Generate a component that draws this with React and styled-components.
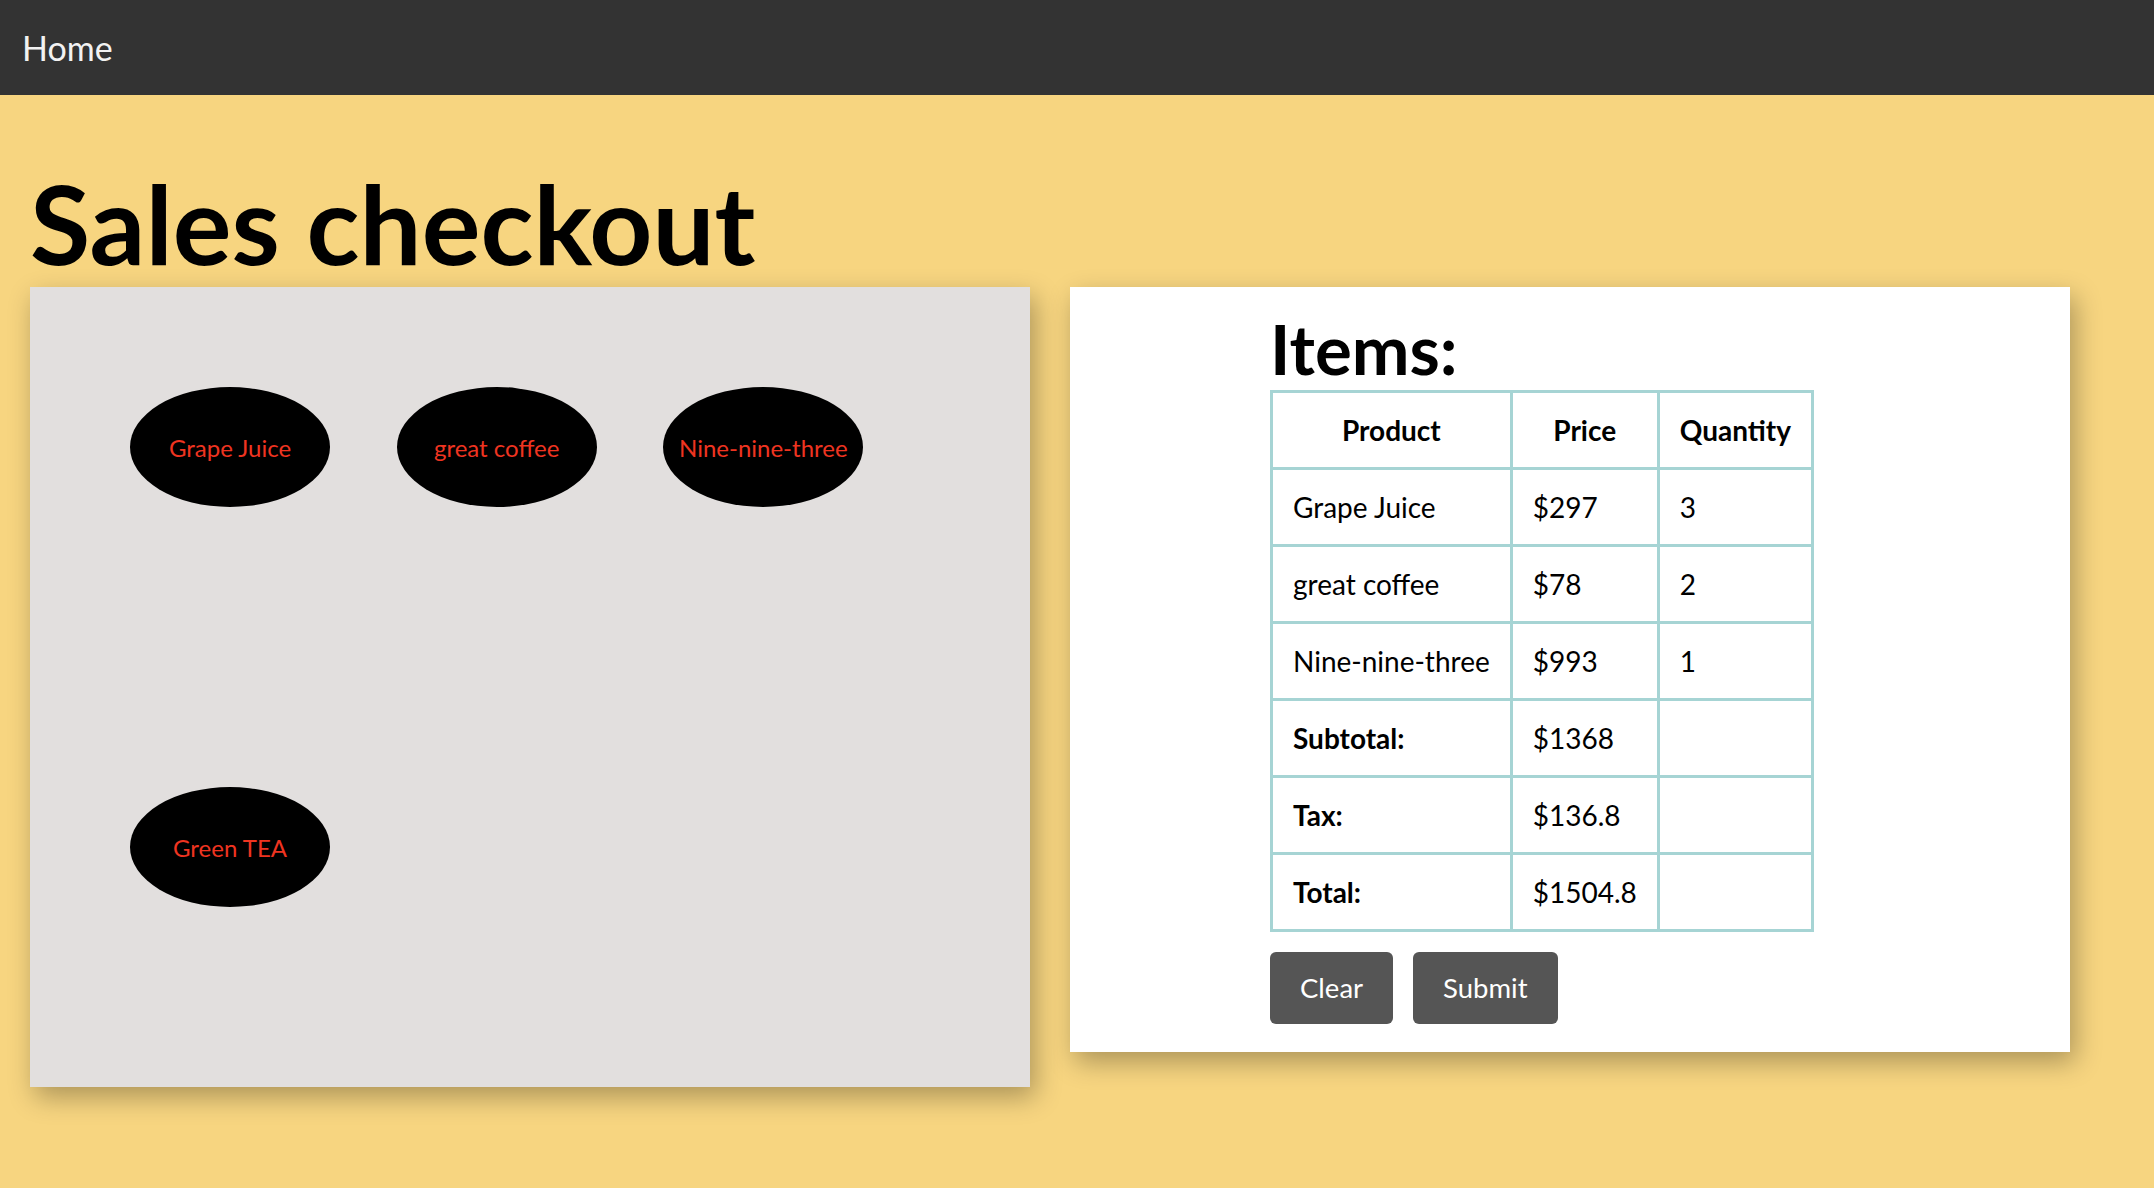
import React from "react";
import styled, { createGlobalStyle } from "styled-components";

const GlobalStyle = createGlobalStyle`
  html, body { margin: 0; padding: 0; }
  body {
    background: #f7d580;
    font-family: Lato, "Noto Sans", "Liberation Sans", sans-serif;
    color: #000;
    min-height: 1188px;
  }
`;

const NavBar = styled.nav`
  height: 95px;
  background: #333333;
  display: flex;
  align-items: center;
  padding-left: 22px;
`;

const NavLink = styled.a`
  color: #f2f2f2;
  font-size: 34px;
  text-decoration: none;
`;

const Main = styled.main`
  padding: 0 30px;
`;

const Title = styled.h1`
  font-size: 110px;
  font-weight: 700;
  line-height: 129px;
  margin: 63px 0 0;
`;

const Panels = styled.div`
  display: flex;
  gap: 40px;
  align-items: flex-start;
`;

const Panel = styled.section`
  box-sizing: border-box;
  width: 1000px;
  box-shadow: 5px 10px 25px rgba(0, 0, 0, 0.3);
`;

const ProductBoard = styled(Panel)`
  height: 800px;
  background: #e2dfde;
  padding: 100px;
  display: grid;
  grid-template-columns: repeat(3, 1fr);
  grid-auto-rows: 120px;
  row-gap: 280px;
  align-content: start;
`;

const ProductBubble = styled.button`
  width: 200px;
  height: 120px;
  border: none;
  border-radius: 50%;
  background: #000;
  color: #ef3420;
  font-family: inherit;
  font-size: 24px;
  display: flex;
  align-items: center;
  justify-content: center;
  padding: 0;
  cursor: pointer;
`;

const Receipt = styled(Panel)`
  background: #fff;
  padding: 20px 0 28px 200px;
`;

const ItemsTitle = styled.h2`
  font-size: 69px;
  font-weight: 700;
  line-height: 83px;
  margin: 0;
`;

const Table = styled.table`
  border-collapse: collapse;
  font-size: 28px;
  border: 3px solid #a6d4d4;
`;

const Th = styled.th`
  border: 3px solid #a6d4d4;
  padding: 20px;
  font-weight: 700;
  text-align: center;
  line-height: 34px;
`;

const Td = styled.td`
  border: 3px solid #a6d4d4;
  padding: 20px;
  text-align: left;
  line-height: 34px;
  font-weight: ${(p) => (p.$bold ? 700 : 400)};
`;

const ButtonRow = styled.div`
  display: flex;
  gap: 20px;
  margin-top: 20px;
`;

const ActionButton = styled.button`
  background: #555555;
  color: #fff;
  border: none;
  border-radius: 6px;
  font-family: inherit;
  font-size: 27.5px;
  line-height: 34px;
  padding: 19px 30px;
  cursor: pointer;
`;

const products = ["Grape Juice", "great coffee", "Nine-nine-three", "Green TEA"];

const items = [
  { name: "Grape Juice", price: "$297", qty: "3" },
  { name: "great coffee", price: "$78", qty: "2" },
  { name: "Nine-nine-three", price: "$993", qty: "1" },
];

const totals = [
  { label: "Subtotal:", value: "$1368" },
  { label: "Tax:", value: "$136.8" },
  { label: "Total:", value: "$1504.8" },
];

export default function App() {
  return (
    <>
      <GlobalStyle />
      <NavBar>
        <NavLink href="#">Home</NavLink>
      </NavBar>
      <Main>
        <Title>Sales checkout</Title>
        <Panels>
          <ProductBoard>
            {products.map((p) => (
              <ProductBubble key={p}>{p}</ProductBubble>
            ))}
          </ProductBoard>
          <Receipt>
            <ItemsTitle>Items:</ItemsTitle>
            <Table>
              <thead>
                <tr>
                  <Th>Product</Th>
                  <Th>Price</Th>
                  <Th>Quantity</Th>
                </tr>
              </thead>
              <tbody>
                {items.map((it) => (
                  <tr key={it.name}>
                    <Td>{it.name}</Td>
                    <Td>{it.price}</Td>
                    <Td>{it.qty}</Td>
                  </tr>
                ))}
                {totals.map((t) => (
                  <tr key={t.label}>
                    <Td $bold>{t.label}</Td>
                    <Td>{t.value}</Td>
                    <Td></Td>
                  </tr>
                ))}
              </tbody>
            </Table>
            <ButtonRow>
              <ActionButton>Clear</ActionButton>
              <ActionButton>Submit</ActionButton>
            </ButtonRow>
          </Receipt>
        </Panels>
      </Main>
    </>
  );
}
